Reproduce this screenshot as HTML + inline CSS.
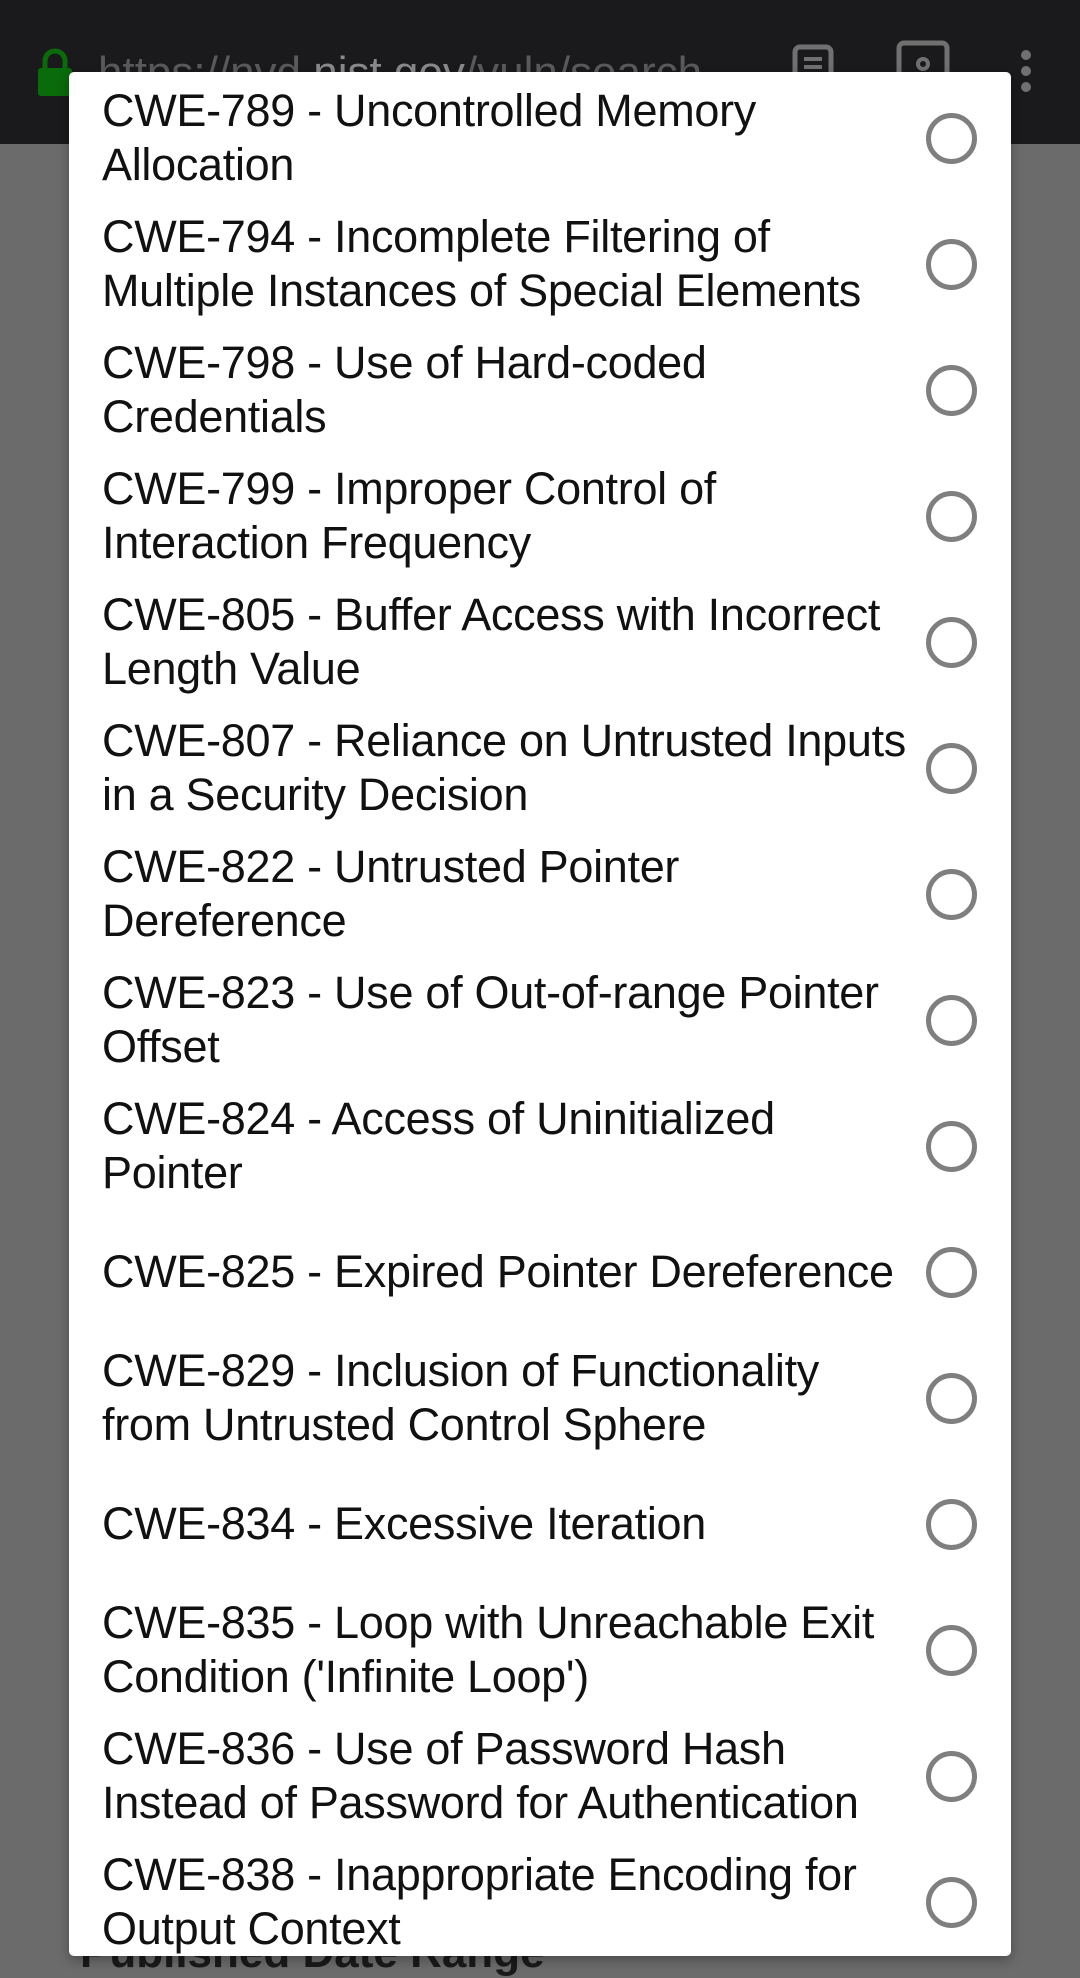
<!DOCTYPE html>
<html><head><meta charset="utf-8"><style>
html,body{margin:0;padding:0;}
body{width:1080px;height:1969px;position:relative;overflow:hidden;background:#6b6b6b;font-family:"Liberation Sans",Arial,sans-serif;}
.bar{position:absolute;left:0;top:0;width:1080px;height:144px;background:#1a1a1c;}
.url{position:absolute;left:98px;top:48px;font-size:44px;color:#5a5a5a;white-space:nowrap;}
.url b{color:#8a8a8a;font-weight:normal}
.lock{position:absolute;left:38px;top:48px;width:34px;height:48px;}
.under{position:absolute;left:80px;top:1928px;font-size:44px;font-weight:bold;color:#1a1a1a;}
.dlg{position:absolute;left:69px;top:72px;width:942px;height:1884px;background:#fff;border-radius:5px;overflow:hidden;box-shadow:0 4px 12px rgba(0,0,0,.3);}
.row{position:absolute;left:0;width:942px;height:126px;}
.txt{position:absolute;left:33px;top:0;height:126px;width:830px;display:flex;align-items:center;font-size:45px;line-height:54px;color:#111;letter-spacing:-0.3px;}
.rad{position:absolute;left:857px;top:38px;width:41px;height:41px;border:5px solid #7f7f7f;border-radius:50%;}
</style></head><body>
<div class="bar">
<svg class="lock" viewBox="0 0 34 48"><path d="M7 20V13a10 10 0 0 1 20 0v7" fill="none" stroke="#0a6b0a" stroke-width="5"/><rect x="0" y="20" width="34" height="28" rx="3" fill="#0a6b0a"/></svg>
<div class="url">https://nvd.<b>nist.gov</b>/vuln/search</div>
<svg style="position:absolute;left:792px;top:44px" width="42" height="40"><rect x="3" y="3" width="36" height="40" rx="5" fill="none" stroke="#707070" stroke-width="5"/><path d="M12 15h18M12 23h18" stroke="#707070" stroke-width="4"/></svg>
<svg style="position:absolute;left:896px;top:40px" width="54" height="34"><rect x="3" y="3" width="48" height="40" rx="5" fill="none" stroke="#707070" stroke-width="5"/><circle cx="27" cy="24" r="5" fill="none" stroke="#707070" stroke-width="4"/></svg>
<svg style="position:absolute;left:1015px;top:50px" width="22" height="44"><circle cx="11" cy="5" r="5" fill="#707070"/><circle cx="11" cy="21" r="5" fill="#707070"/><circle cx="11" cy="37" r="5" fill="#707070"/></svg>
</div>
<div class="under">Published Date Range</div>
<div class="dlg">
<div class="row" style="top:3px"><div class="txt">CWE-789 - Uncontrolled Memory<br>Allocation</div><div class="rad"></div></div>
<div class="row" style="top:129px"><div class="txt">CWE-794 - Incomplete Filtering of<br>Multiple Instances of Special Elements</div><div class="rad"></div></div>
<div class="row" style="top:255px"><div class="txt">CWE-798 - Use of Hard-coded<br>Credentials</div><div class="rad"></div></div>
<div class="row" style="top:381px"><div class="txt">CWE-799 - Improper Control of<br>Interaction Frequency</div><div class="rad"></div></div>
<div class="row" style="top:507px"><div class="txt">CWE-805 - Buffer Access with Incorrect<br>Length Value</div><div class="rad"></div></div>
<div class="row" style="top:633px"><div class="txt">CWE-807 - Reliance on Untrusted Inputs<br>in a Security Decision</div><div class="rad"></div></div>
<div class="row" style="top:759px"><div class="txt">CWE-822 - Untrusted Pointer<br>Dereference</div><div class="rad"></div></div>
<div class="row" style="top:885px"><div class="txt">CWE-823 - Use of Out-of-range Pointer<br>Offset</div><div class="rad"></div></div>
<div class="row" style="top:1011px"><div class="txt">CWE-824 - Access of Uninitialized<br>Pointer</div><div class="rad"></div></div>
<div class="row" style="top:1137px"><div class="txt">CWE-825 - Expired Pointer Dereference</div><div class="rad"></div></div>
<div class="row" style="top:1263px"><div class="txt">CWE-829 - Inclusion of Functionality<br>from Untrusted Control Sphere</div><div class="rad"></div></div>
<div class="row" style="top:1389px"><div class="txt">CWE-834 - Excessive Iteration</div><div class="rad"></div></div>
<div class="row" style="top:1515px"><div class="txt">CWE-835 - Loop with Unreachable Exit<br>Condition ('Infinite Loop')</div><div class="rad"></div></div>
<div class="row" style="top:1641px"><div class="txt">CWE-836 - Use of Password Hash<br>Instead of Password for Authentication</div><div class="rad"></div></div>
<div class="row" style="top:1767px"><div class="txt">CWE-838 - Inappropriate Encoding for<br>Output Context</div><div class="rad"></div></div>
</div>
</body></html>
